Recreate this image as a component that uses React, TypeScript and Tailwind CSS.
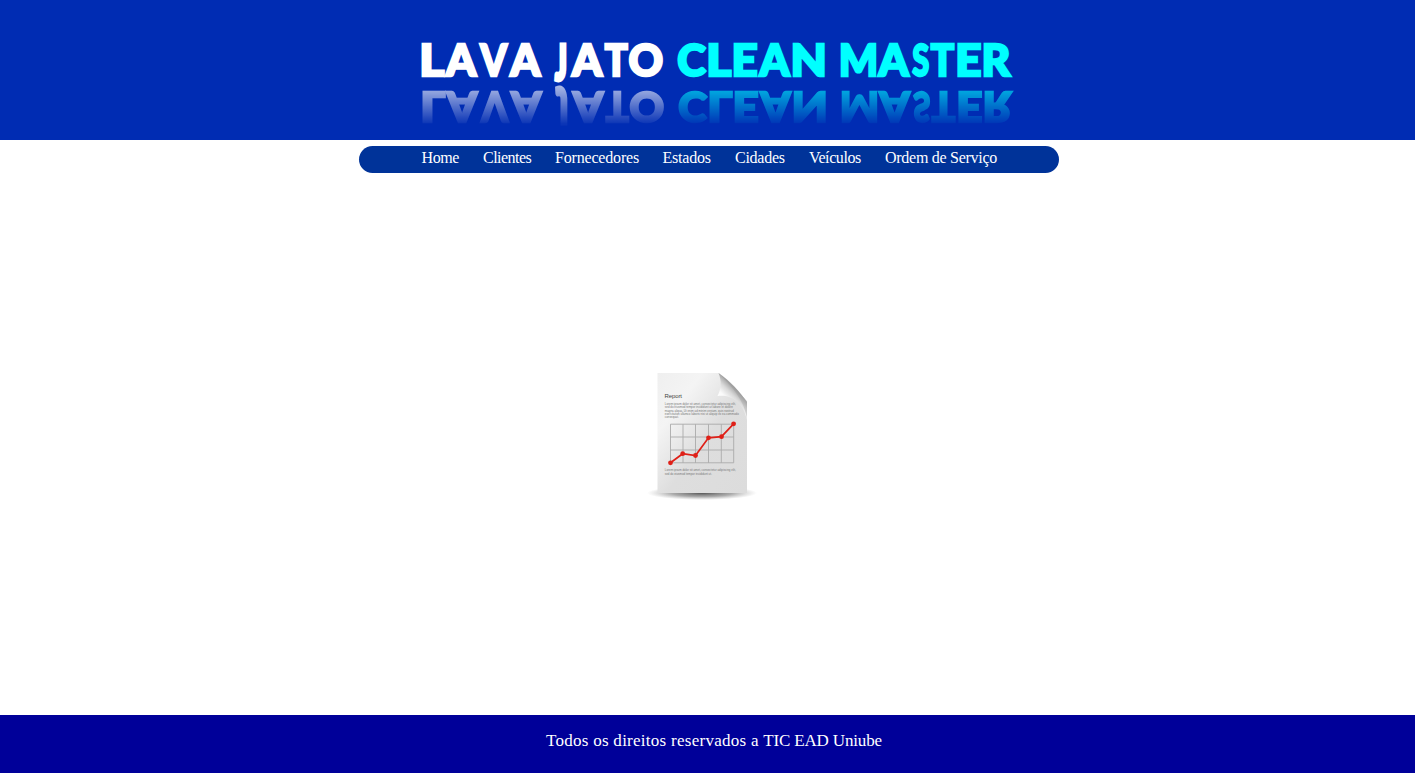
import React from 'react';

type Glyph = { ch: string; x: number; w: number };

const whiteWord: Glyph[] = [
  { ch: 'L', x: 419.3, w: 25 },
  { ch: 'A', x: 446, w: 30.2 },
  { ch: 'V', x: 480.2, w: 26.8 },
  { ch: 'A', x: 510.2, w: 30 },
  { ch: 'A', x: 572, w: 30.2 },
  { ch: 'T', x: 604.8, w: 23 },
  { ch: 'O', x: 628.5, w: 34.6 },
];

const cyanWord: Glyph[] = [
  { ch: 'C', x: 677.3, w: 28.6 },
  { ch: 'L', x: 706.2, w: 25 },
  { ch: 'E', x: 731.4, w: 26.2 },
  { ch: 'A', x: 759.5, w: 30 },
  { ch: 'N', x: 790.6, w: 36.4 },
  { ch: 'M', x: 838.7, w: 39.4 },
  { ch: 'A', x: 878.6, w: 30.2 },
  { ch: 'S', x: 912.3, w: 17 },
  { ch: 'T', x: 930.8, w: 23.4 },
  { ch: 'E', x: 955.2, w: 26.2 },
  { ch: 'R', x: 981.6, w: 28.8 },
];

function Word({ glyphs, fill }: { glyphs: Glyph[]; fill: string }) {
  return (
    <>
      {glyphs.map((g) => (
        <text key={g.x} x={g.x} y="75.9" textLength={g.w} lengthAdjust="spacingAndGlyphs" fill={fill} stroke={fill}>
          {g.ch}
        </text>
      ))}
    </>
  );
}

function Title() {
  return (
    <g fontFamily="Lato, sans-serif" fontWeight="900" fontSize="43" strokeWidth="2.4">
      <Word glyphs={whiteWord} fill="#fff" />
      <text transform="translate(555.2 80) scale(0.62 1.12)" fill="#fff" stroke="#fff" strokeWidth="4.4">J</text>
      <Word glyphs={cyanWord} fill="#0ff" />
    </g>
  );
}

function Logo() {
  return (
    <svg className="block h-[140px] w-[1415px] shrink-0" viewBox="0 0 1415 140" role="img" aria-label="Lava Jato Clean Master">
      <defs>
        <linearGradient id="fade" gradientUnits="userSpaceOnUse" x1="0" y1="85" x2="0" y2="124">
          <stop offset="0" stopColor="#fff" stopOpacity="0.68" />
          <stop offset="1" stopColor="#fff" stopOpacity="0.04" />
        </linearGradient>
        <mask id="reflection" maskUnits="userSpaceOnUse" x="400" y="80" width="640" height="60">
          <rect x="400" y="80" width="640" height="60" fill="url(#fade)" />
        </mask>
      </defs>
      <Title />
      <g mask="url(#reflection)">
        <g transform="translate(1 165.2) scale(1 -0.97)">
          <Title />
        </g>
      </g>
    </svg>
  );
}

const points: [number, number][] = [[30.5, 97.8], [42.7, 88.7], [55.5, 90.5], [68.5, 72.8], [81.5, 71.7], [93.6, 58.8]];

const upperLines: [string, number][] = [
  ['Lorem ipsum dolor sit amet, consectetur adipiscing elit,', 71],
  ['sed do eiusmod tempor incididunt ut labore et dolore', 68],
  ['magna aliqua. Ut enim ad minim veniam, quis nostrud', 69],
  ['exercitation ullamco laboris nisi ut aliquip ex ea commodo', 74],
  ['consequat.', 14],
];

const lowerLines: [string, number][] = [
  ['Lorem ipsum dolor sit amet, consectetur adipiscing elit,', 71],
  ['sed do eiusmod tempor incididunt ut.', 47],
];

function Report() {
  return (
    <svg className="block h-[140px] w-[125px]" viewBox="0 0 125 140" role="img" aria-label="Report">
      <defs>
        <linearGradient id="paper" x1="0" y1="0" x2="1" y2="1">
          <stop offset="0" stopColor="#efefef" />
          <stop offset="0.25" stopColor="#f4f4f4" />
          <stop offset="0.55" stopColor="#dedede" />
          <stop offset="1" stopColor="#dcdcdc" />
        </linearGradient>
        <linearGradient id="curl" gradientUnits="userSpaceOnUse" x1="81" y1="36" x2="95" y2="22">
          <stop offset="0" stopColor="#fff" />
          <stop offset="0.3" stopColor="#fafafa" />
          <stop offset="0.65" stopColor="#d8d8d8" />
          <stop offset="1" stopColor="#9c9c9c" />
        </linearGradient>
        <radialGradient id="shadow">
          <stop offset="0" stopColor="#555" />
          <stop offset="0.55" stopColor="#888" stopOpacity="0.7" />
          <stop offset="1" stopColor="#aaa" stopOpacity="0" />
        </radialGradient>
      </defs>
      <ellipse cx="62" cy="128" rx="55" ry="7" fill="url(#shadow)" />
      <path d="M17.5 8H79L107 36V128H17.5Z" fill="url(#paper)" />
      <path d="M78.5 8C82 16 81 25 77.5 31C90 29 103 36 107 55V37C101 28 89 15 78.5 8Z" fill="url(#curl)" />
      <path d="M78.5 8C90 15 101 28 107 37V55C106 38 92 21 78.5 8Z" fill="#888" opacity="0.25" />
      <text x="24.5" y="32.7" fontFamily="Liberation Sans, sans-serif" fontSize="6" fill="#444" textLength="17.5">Report</text>
      <g fontFamily="Liberation Sans, sans-serif" fontSize="2.9" fill="#777">
        {upperLines.map(([line, width], i) => (
          <text key={line} x="24.8" y={40 + i * 3.25} textLength={width} lengthAdjust="spacingAndGlyphs">{line}</text>
        ))}
        {lowerLines.map(([line, width], i) => (
          <text key={line} x="24.8" y={106.3 + i * 3.4} textLength={width} lengthAdjust="spacingAndGlyphs">{line}</text>
        ))}
      </g>
      <path d="M30.5 59.2H93.7V97.8H30.5ZM30.5 72H93.7M30.5 85H93.7M43 59.2V97.8M55.5 59.2V97.8M68.5 59.2V97.8M81.3 59.2V97.8" fill="none" stroke="#aaa" strokeWidth="0.9" />
      <polyline points={points.map((p) => p.join(',')).join(' ')} fill="none" stroke="#df2018" strokeWidth="1.7" />
      {points.map(([x, y]) => (
        <circle key={x} cx={x} cy={y} r="2.4" fill="#df2018" />
      ))}
    </svg>
  );
}

export default function App() {
  return (
    <div className="flex h-[773px] w-full flex-col overflow-hidden bg-white font-['Liberation_Serif',serif] text-white">
      <header className="flex h-[140px] shrink-0 justify-center bg-[#002cb3]">
        <Logo />
      </header>
      <nav className="mt-1.5 ml-[359px] flex h-[27px] w-[700px] shrink-0 rounded-[14px] bg-[#003399] pl-[62.5px] text-base leading-6">
        <a className="w-[61.5px] tracking-[-0.4px]">Home</a>
        <a className="w-[72px] tracking-[-0.53px]">Clientes</a>
        <a className="w-[107.5px] tracking-[-0.18px]">Fornecedores</a>
        <a className="w-[72.5px] tracking-[-0.2px]">Estados</a>
        <a className="w-[74px] tracking-[-0.25px]">Cidades</a>
        <a className="w-[76px] tracking-[-0.4px]">Veículos</a>
        <a className="whitespace-nowrap tracking-[-0.27px]">Ordem de Serviço</a>
      </nav>
      <main className="flex grow pt-[192px] pl-[640px]">
        <Report />
      </main>
      <footer className="h-[58px] shrink-0 bg-[#000099] pt-[14px] pl-[546px] text-[17px] leading-6 tracking-[0.27px]">
        Todos os direitos reservados a <span className="tracking-[-0.16px]">TIC EAD Uniube</span>
      </footer>
    </div>
  );
}
